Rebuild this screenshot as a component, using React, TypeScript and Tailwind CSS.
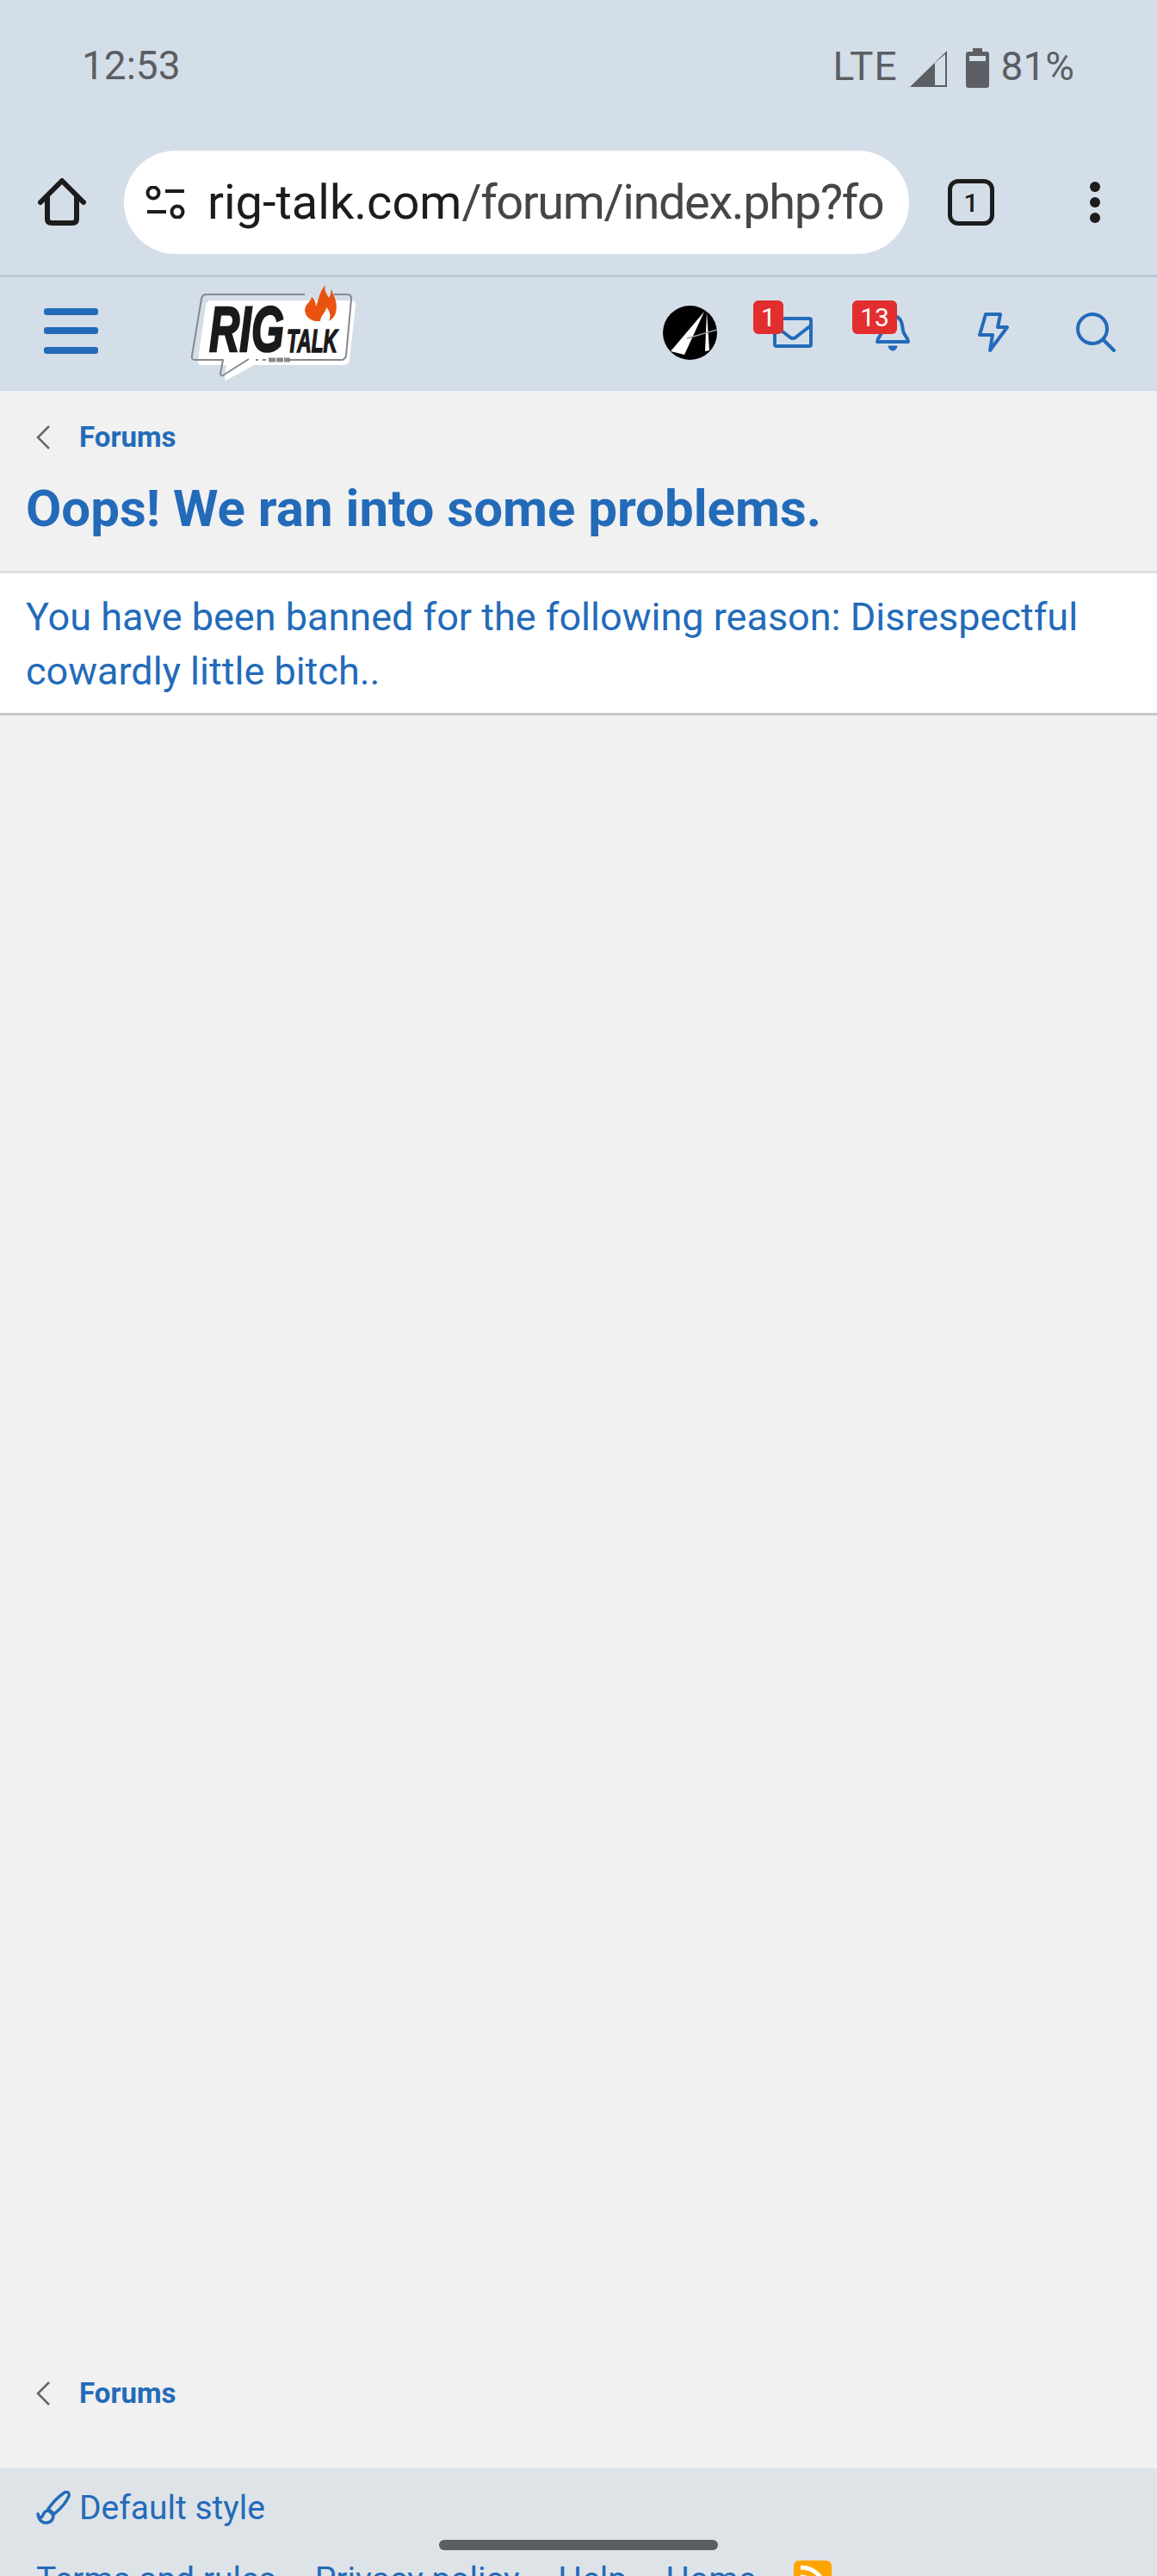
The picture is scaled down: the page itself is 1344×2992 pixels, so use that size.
const blue = "#236bb9";

function Logo() {
  return (
    <svg width="200" height="120" viewBox="0 0 200 120" className="block">
      <path d="M25 21 H188 Q194 21 193 27 L186 90 Q185 96 179 96 H75 L44 113 Q41 115 41 111 L43 96 H14 Q9 96 10 90 L19 27 Q20 21 25 21 Z" fill="#fff" />
      <path d="M134 14 H20 Q15 14 14 19 L3 85 Q2 90 7 90 H39 L36 106 Q36 109 39 108 L69 89" fill="none" stroke="#85898d" strokeWidth="2" strokeLinejoin="round" />
      <path d="M168 14 H183 Q189 14 188 20 L182 85 Q181 90 176 90 H117" fill="none" stroke="#85898d" strokeWidth="2" />
      <path d="M77 90 H80 M85 90 H89" stroke="#85898d" strokeWidth="2" />
      <rect x="92" y="87.5" width="8" height="5" fill="#85898d" />
      <rect x="101" y="87.5" width="8" height="5" fill="#85898d" />
      <rect x="110" y="87.5" width="7" height="5" fill="#85898d" />
      <text x="23" y="80" fontFamily="'Liberation Sans', sans-serif" fontWeight="700" fontStyle="italic" fontSize="74" fill="#1a1a1a" stroke="#1a1a1a" strokeWidth="2.5" textLength="87" lengthAdjust="spacingAndGlyphs">RIG</text>
      <text x="113" y="81" fontFamily="'Liberation Sans', sans-serif" fontWeight="700" fontStyle="italic" fontSize="36" fill="#1a1a1a" stroke="#1a1a1a" strokeWidth="1.5" textLength="59" lengthAdjust="spacingAndGlyphs">TALK</text>
      <path d="M146 45 C137 43 132 35 135 28 C137 24 141 22 142 17 C146 20 147 25 147 28 C150 22 150 12 158 3 C156 10 160 14 162 18 C165 14 164 10 165 8 C168 17 173 24 170 35 C169 40 165 43 162 45 C165 38 163 33 159 29 C159 35 153 37 152 45 Z" fill="#e9530f" />
    </svg>
  );
}

function Crumb() {
  return (
    <div className="flex items-center h-[42px] pl-[41px]">
      <svg width="18" height="28" viewBox="0 0 18 28" fill="none" stroke="#666" strokeWidth="2.5"><path d="M16 1 L3 14 L16 27" /></svg>
      <span className="ml-[33px] text-[33px] font-bold text-[#236bb9] leading-[42px]">Forums</span>
    </div>
  );
}

function Badge({ children, className }: { children: React.ReactNode; className: string }) {
  return (
    <span className={`absolute h-[39px] rounded-[6px] bg-[#e22e2e] text-white text-[30px] leading-[39px] text-center ${className}`}>{children}</span>
  );
}

export default function App() {
  return (
    <div className="relative w-[1344px] h-[2992px] overflow-hidden bg-[#f1f1f1] font-['Roboto',sans-serif] flex flex-col">
      <div className="h-[322px] shrink-0 bg-[#d4dee9] border-b-[3px] border-[#bccad8] flex flex-col">
        <div className="h-[175px] flex justify-between items-start pt-[51px] pl-[95px] pr-[96px] text-[#5b5e63] text-[46px] leading-[50px]">
          <span>12:53</span>
          <div className="flex items-center">
            <span className="tracking-[1px]">LTE</span>
            <svg width="44" height="43" viewBox="0 0 44 43" className="ml-[14px] mt-[8px]"><path d="M43 0 V42 H0 Z" fill="#5b5e63" /><path d="M29 14 L41 4 V40 H29 Z" fill="#d4dee9" /></svg>
            <svg width="27" height="46" viewBox="0 0 27 46" className="ml-[21px] mt-[4px]"><path d="M8 0 H19 V4 H24 Q27 4 27 7 V43 Q27 46 24 46 H3 Q0 46 0 43 V7 Q0 4 3 4 H8 Z" fill="#5b5e63" /><rect x="4" y="9" width="19" height="6" fill="#d4dee9" /></svg>
            <span className="ml-[14px]">81%</span>
          </div>
        </div>
        <div className="h-[120px] flex items-center">
          <div className="w-[144px] flex justify-center">
            <svg width="56" height="56" viewBox="0 0 56 56" fill="none" stroke="#1c1c1c" strokeWidth="6" strokeLinejoin="round" strokeLinecap="round"><path d="M3 28 L28 3 L53 28" /><path d="M11 22 V47 Q11 52 16 52 H40 Q45 52 45 47 V22" /></svg>
          </div>
          <div className="w-[912px] h-[120px] bg-white rounded-full flex items-center pl-[25px] pr-[26px]">
            <svg width="46" height="38" viewBox="0 0 46 38" fill="none" stroke="#1c1c1c" strokeWidth="4" className="shrink-0"><circle cx="9" cy="8" r="6.5" /><path d="M23 6 H45" /><path d="M2 30 H24" /><circle cx="37" cy="30" r="6.5" /></svg>
            <div className="ml-[26px] overflow-hidden whitespace-nowrap text-[56px] leading-[66px] text-[#444746]"><span className="text-[#1c1c1c]">rig-talk.com</span><span className="tracking-[-1.4px]">/forum/index.php?forum</span></div>
          </div>
          <div className="w-[144px] flex justify-center">
            <div className="w-[54px] h-[54px] rounded-[12px] border-[5px] border-[#1c1c1c] flex items-center justify-center text-[30px] font-medium text-[#1c1c1c]">1</div>
          </div>
          <div className="flex-1 flex flex-col items-center gap-[6px]">
            <span className="w-[12px] h-[12px] rounded-full bg-[#1c1c1c]" />
            <span className="w-[12px] h-[12px] rounded-full bg-[#1c1c1c]" />
            <span className="w-[12px] h-[12px] rounded-full bg-[#1c1c1c]" />
          </div>
        </div>
      </div>

      <div className="h-[132px] shrink-0 bg-[#d4dee9] flex items-center relative">
        <div className="ml-[51px] w-[63px] flex flex-col gap-[14.5px] mb-[8px]">
          <span className="h-[8px] rounded-[3px] bg-[#236bb9]" />
          <span className="h-[8px] rounded-[3px] bg-[#236bb9]" />
          <span className="h-[8px] rounded-[3px] bg-[#236bb9]" />
        </div>
        <div className="ml-[106px]"><Logo /></div>
        <div className="ml-auto flex items-center pr-[48px] mb-[4px]">
          <svg width="63" height="63" viewBox="0 0 63 63">
            <circle cx="31.5" cy="31.5" r="31.5" fill="#000" />
            <path d="M9 53 L48 7 L25 57 Z" fill="#fff" />
            <path d="M51 7 L54 52 L49 53 Z" fill="#fff" />
            <path d="M28 38 L63 28" stroke="#999" strokeWidth="1.5" />
          </svg>
          <div className="relative ml-[65px] w-[46px] h-[36px]">
            <svg width="46" height="36" viewBox="0 0 46 36" fill="none" stroke={blue} strokeWidth="4" strokeLinejoin="round"><rect x="2" y="2" width="42" height="32" rx="2" /><path d="M2 10 L20 24 Q23 26 26 24 L44 10" /></svg>
            <Badge className="left-[-23px] top-[-19px] w-[35px]">1</Badge>
          </div>
          <div className="relative ml-[73px] w-[40px] h-[44px]">
            <svg width="40" height="44" viewBox="0 0 40 44" fill="none" stroke={blue} strokeWidth="4" strokeLinejoin="round"><path d="M20 3 C30 3 31 12 32 20 C33 26 38 28 38 33 H2 C2 28 7 26 8 20 C9 12 10 3 20 3 Z" /><path d="M15 38 H25 Q24 43 20 43 Q16 43 15 38 Z" fill={blue} strokeWidth="1" /></svg>
            <Badge className="left-[-27px] top-[-15px] w-[52px]">13</Badge>
          </div>
          <svg width="36" height="46" viewBox="0 0 36 46" fill="none" stroke={blue} strokeWidth="4" strokeLinejoin="round" className="ml-[79px]"><path d="M9 2 H26 L23 17 H34 L14 44 L17 26 H2 Z" /></svg>
          <svg width="46" height="46" viewBox="0 0 46 46" fill="none" stroke={blue} strokeWidth="4" strokeLinecap="round" className="ml-[78px]"><circle cx="19" cy="19" r="17" /><path d="M31 31 L44 44" /></svg>
        </div>
      </div>

      <div className="pt-[33px]"><Crumb /></div>
      <h1 className="mt-[26px] pl-[30px] text-[60px] leading-[72px] font-bold text-[#236bb9]">Oops! We ran into some problems.</h1>
      <div className="mt-[36px] bg-white border-y-[3px] border-t-[#dfdfdf] border-b-[#c8c8c8] px-[30px] pt-[19px] pb-[17px] text-[45px] leading-[63px] text-[#236bb9]">
        You have been banned for the following reason: Disrespectful cowardly little bitch..
      </div>
      <div className="flex-1" />
      <div className="mb-[66px]"><Crumb /></div>
      <div className="h-[125px] shrink-0 bg-[#dee3e8] pl-[42px] overflow-hidden">
        <div className="flex items-center mt-[22px] h-[48px]">
          <svg width="40" height="40" viewBox="0 0 40 40" fill="none" stroke="#236bb9" strokeWidth="3.5" strokeLinecap="round" strokeLinejoin="round" className="shrink-0"><path d="M33 2 C35 0 39 2 38 6 C35 14 27 22 21 27 L14 21 C19 14 27 6 33 2 Z" /><path d="M2 27 C3 35 8 38 13 37 C19 36 21 31 19 27 L14 23 C9 23 8 28 7 30 C6 32 3 31 2 27 Z" /></svg>
          <span className="ml-[10px] text-[39px] leading-[48px] text-[#236bb9]">Default style</span>
        </div>
        <div className="flex items-start mt-[35px] text-[39px] leading-[48px] text-[#236bb9]">
          <span>Terms and rules</span>
          <span className="ml-[45px]">Privacy policy</span>
          <span className="ml-[45px]">Help</span>
          <span className="ml-[45px]">Home</span>
          <svg width="44" height="44" viewBox="0 0 44 44" fill="none" stroke="#fff" strokeWidth="5" className="ml-[44px] mt-[2px] shrink-0"><rect width="44" height="44" rx="6" fill="#ffa500" stroke="none" /><path d="M8 8 C24 8 36 20 36 36" /><path d="M8 19 C18 19 25 26 25 36" /><circle cx="12" cy="32" r="4" fill="#fff" stroke="none" /></svg>
        </div>
      </div>
      <div className="absolute left-[510px] top-[2950px] w-[324px] h-[12px] rounded-full bg-[#5c5d5f]" />
    </div>
  );
}
